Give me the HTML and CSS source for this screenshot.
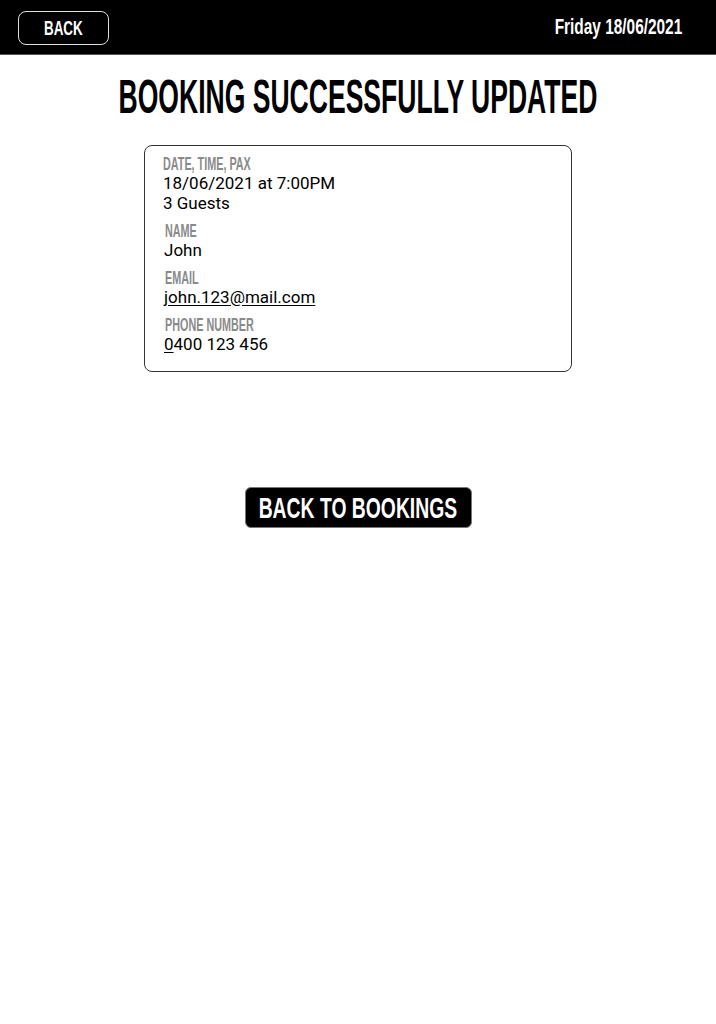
FILE: index.html
```html
<!DOCTYPE html>
<html>
<head>
<meta charset="utf-8">
<link rel="stylesheet" href="styles.css">
</head>
<body>
<header class="topbar">
  <button class="back-btn"><span class="sq sq-back">BACK</span></button>
  <div class="date"><span class="sq sq-date">Friday 18/06/2021</span></div>
</header>
<main class="content">
  <h1 class="title"><span class="sq sq-title">BOOKING SUCCESSFULLY UPDATED</span></h1>
  <section class="card">
    <div class="label"><span class="sq sq-label">DATE, TIME, PAX</span></div>
    <div class="value">18/06/2021 at 7:00PM</div>
    <div class="value">3 Guests</div>
    <div class="label l2"><span class="sq sq-label">NAME</span></div>
    <div class="value v2">John</div>
    <div class="label l2"><span class="sq sq-label">EMAIL</span></div>
    <div class="value v2 link">john.123@mail.com</div>
    <div class="label l2"><span class="sq sq-label">PHONE NUMBER</span></div>
    <div class="value v2"><span class="caret">0</span>400 123 456</div>
  </section>
  <button class="primary-btn"><span class="sq sq-btn">BACK TO BOOKINGS</span></button>
</main>
</body>
</html>
```
FILE: styles.css
```css
html, body {
  margin: 0;
  padding: 0;
  background: #fff;
  overflow-x: hidden;
}
body {
  width: 716px;
  font-family: Roboto, "Liberation Sans", sans-serif;
}
.sq {
  display: inline-block;
  white-space: nowrap;
  font-family: "Liberation Sans", Arial, sans-serif;
  font-weight: bold;
}
.topbar {
  height: 55px;
  background: #000;
  border-bottom: 1px solid #555;
  box-sizing: border-box;
  display: flex;
  align-items: center;
  justify-content: space-between;
  padding: 0 34px 0 18px;
}
.back-btn {
  width: 91px;
  height: 34px;
  background: #000;
  color: #fff;
  border: 1.5px solid #ddd;
  border-radius: 8px;
  font-size: 21px;
  line-height: 24px;
  padding: 0;
  margin-top: 1px;
  display: flex;
  align-items: center;
  justify-content: center;
}
.sq-back {
  transform: scaleX(0.64);
}
.date {
  color: #fff;
  font-size: 22px;
  line-height: 24px;
  display: flex;
  justify-content: flex-end;
}
.sq-date {
  transform: scaleX(0.70);
  transform-origin: right center;
}
.content {
  display: flex;
  flex-direction: column;
  align-items: center;
}
.title {
  margin: 14px 0 0 0;
  width: 716px;
  display: flex;
  justify-content: center;
  overflow: hidden;
  font-size: 48px;
  line-height: 55px;
  color: #000;
}
.sq-title {
  transform: scaleX(0.553);
}
.card {
  margin-top: 21px;
  width: 428px;
  height: 227px;
  box-sizing: border-box;
  border: 1.5px solid #333;
  border-radius: 8px;
  padding: 9px 18px 0 18px;
}
.label {
  color: #8a8a8a;
  font-size: 18px;
  line-height: 18px;
}
.sq-label {
  transform: scaleX(0.6);
  transform-origin: left center;
}
.l2 {
  margin-top: 9px;
  padding-left: 2px;
}
.value {
  font-size: 17px;
  line-height: 20px;
  color: #000;
}
.v2 {
  padding-left: 1px;
}
.link {
  text-decoration: underline;
  text-underline-offset: 2px;
}
.caret {
  text-decoration: underline;
  text-underline-offset: 2px;
}
.primary-btn {
  margin-top: 115px;
  width: 227px;
  height: 41px;
  box-sizing: border-box;
  background: #000;
  color: #fff;
  border: 1px solid #777;
  border-radius: 6px;
  font-size: 30px;
  padding: 0;
  display: flex;
  align-items: center;
  justify-content: center;
}
.sq-btn {
  transform: scaleX(0.645);
}
```
